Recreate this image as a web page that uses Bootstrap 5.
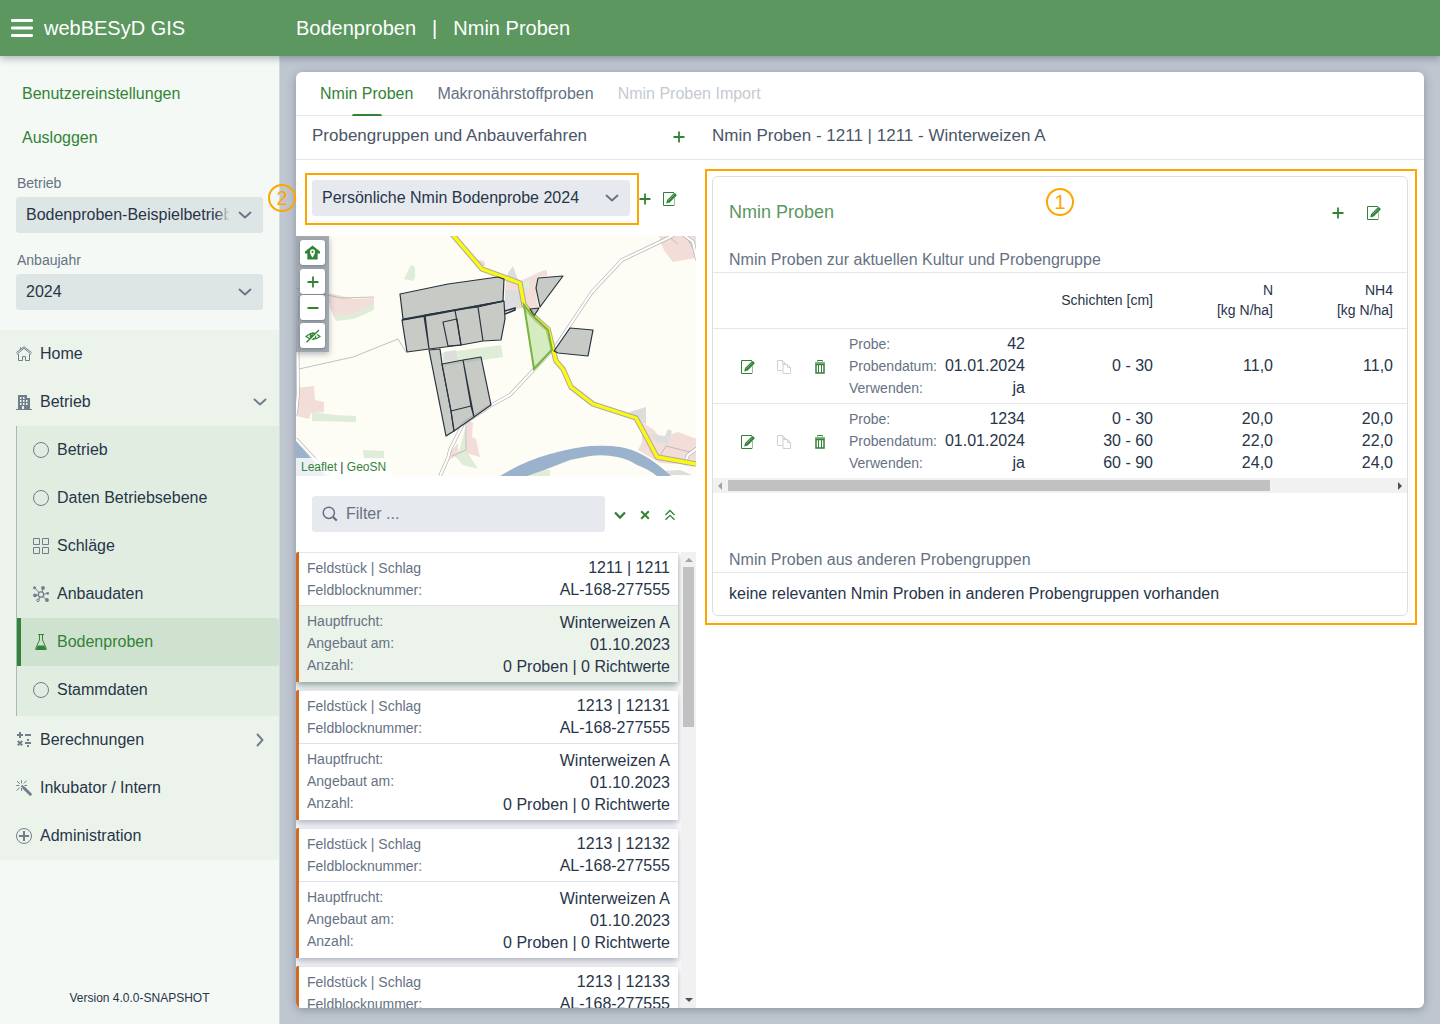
<!DOCTYPE html>
<html lang="de">
<head>
<meta charset="utf-8">
<meta name="viewport" content="width=device-width, initial-scale=1">
<title>webBESyD GIS</title>
<link href="https://cdn.jsdelivr.net/npm/bootstrap@5.3.0/dist/css/bootstrap.min.css" rel="stylesheet">
<script src="https://cdn.jsdelivr.net/npm/bootstrap@5.3.0/dist/js/bootstrap.bundle.min.js" defer></script>
<style>
:root{--ink:#283549;--ink2:#667283;--ink3:#4a5667;--gr:#338336;--line:#e4e6ea;--mark-c:#ffa500}
body{font-family:"Liberation Sans",Arial,sans-serif;font-size:16px;line-height:24px;color:var(--ink);background:#bfc6d0}
a{color:var(--gr);text-decoration:none}
svg{display:block;flex:none}
.topbar{height:56px;background:#5b975f;color:#fff;font-size:20px;box-shadow:0 2px 8px rgba(40,55,80,.4);z-index:3}
.brand-area{width:296px;padding-left:11px;gap:11px}
.icon-btn{border:0;background:none;padding:0;width:25px;height:25px;color:var(--gr);display:inline-flex;align-items:center;justify-content:center;flex:none}
.icon-btn:disabled{color:#cdd2d9}
.top-btn{width:22px;color:#fff}
.side{width:280px;background:#f4f9f5;border-right:1px solid #d3dbdf;padding-top:16px}
.side-link{display:block;padding:10px 22px;color:var(--gr)}
.side-form{padding:11px 16px 20px}
.field-label{display:block;font-size:14px;line-height:24px;color:var(--ink2);padding-left:1px;margin-bottom:2px}
.field-gap{margin-top:15px}
.fancy-select{--bs-form-select-bg-img:url("data:image/svg+xml,%3Csvg xmlns='http://www.w3.org/2000/svg' viewBox='0 0 16 16'%3E%3Cpath fill='none' stroke='%23667283' stroke-width='1.8' stroke-linecap='round' stroke-linejoin='round' d='M2.500 5.500l5.500 5 5.500-5'/%3E%3C/svg%3E");
 height:36px;border:0;border-radius:3px;background-color:#e6e9ee;color:var(--ink);font-size:16px;padding:0 34px 0 10px;background-size:16px 16px;background-position:right 10px center;line-height:24px}
.side .fancy-select{background-color:#dee6e5}
.fade-wrap{position:relative}
.fade-wrap::after{content:"";position:absolute;right:34px;top:4px;bottom:4px;width:14px;background:linear-gradient(90deg,rgba(222,230,229,0),rgba(222,230,229,.9));pointer-events:none}
.menu-block{background:#ebf3eb}
.menu-item{display:flex;align-items:center;gap:8px;height:48px;padding:0 11px 0 16px;color:var(--ink)}
.menu-item svg{color:#717d8b}
.submenu{margin-left:16px;border-left:1px solid #a9b8bd;background:#e1ede1;padding-bottom:2px}
.menu-item.current{background:#cfe2cf;color:var(--gr);border-left:4px solid var(--gr);padding-left:12px;border-radius:0 3px 3px 0}
.menu-item.current svg{color:var(--gr)}
.version{font-size:12px;line-height:16px;padding-bottom:18px;text-align:center}
.workspace{padding:16px;background:#bfc6d0}
.panel{background:#fff;border-radius:6px;box-shadow:0 2px 10px rgba(40,55,80,.35)}
.panel-body{min-height:0}
.tabs{border-bottom:1px solid var(--line);padding:0 24px;gap:24px;height:44px}
.tabs .tab-link{position:relative;border:0;background:none;padding:0;color:var(--ink2)}
.tabs .tab-link.current{color:var(--gr)}
.tabs .tab-link.current::after{content:"";position:absolute;left:50%;margin-left:-15px;bottom:-1px;width:30px;height:2px;border-radius:2px 2px 0 0;background:var(--gr)}
.tabs .tab-link:disabled{color:#c5cad2}
.left-col{width:400px}
.col-head{height:44px;border-bottom:1px solid var(--line);font-size:17px;color:var(--ink3);padding:0 5px 4px 16px}
.col-head .icon-btn{margin-top:3px}
.tool-row{padding:20px 14px 20px 16px;gap:2px}
.tool-btns{padding-top:2px}
.framed{position:relative}
.framed::before{content:"";position:absolute;inset:-7px -9px -9px -7px;border:2px solid var(--mark-c);pointer-events:none;z-index:2}
.probe-card.framed::before{inset:-8px -10px -10px -8px}
.callout{position:absolute;z-index:4;width:28px;height:28px;border:2px solid var(--mark-c);border-radius:50%;color:var(--mark-c);font-size:20px;line-height:24px;text-align:center}
.callout.two{left:-44px;top:4px}
.callout.one{left:50%;margin-left:-14px;top:11px}
.map{height:240px;position:relative;overflow:hidden;background:#fefdf5}
.map-tools{position:absolute;left:0;top:0;padding:4px;background:rgba(125,135,150,.72);box-shadow:0 2px 6px rgba(40,55,80,.35);gap:4px}
.map-tools .icon-btn{background:#fff;border-radius:3px;box-shadow:0 1px 3px rgba(40,55,80,.35)}
.zoom-pair{gap:1px;margin-bottom:-1px}
.map-credit{position:absolute;left:0;bottom:0;background:rgba(255,255,255,.8);padding:0 5px;font-size:12px;line-height:18px}
.filter-box{position:relative}
.filter-box svg{position:absolute;left:10px;top:10px;color:var(--ink2)}
.filter-box .form-control{height:36px;border:0;border-radius:3px;background:#e6e9ee;padding:0 10px 0 34px;font-size:16px;line-height:24px}
.filter-box .form-control::placeholder{color:var(--ink2)}
.entries{overflow:hidden;padding-right:3px;border-bottom-left-radius:6px}
.entry{border-left:3px solid #d2691e;background:#fff;margin-bottom:8px;border-radius:2px 0 0 0;box-shadow:0 3px 6px rgba(45,60,95,.3),0 6px 10px rgba(45,60,95,.1)}
.entry.chosen{box-shadow:0 3px 6px rgba(45,75,70,.4),0 6px 10px rgba(45,95,80,.2)}
.entry-top{border-top:1px solid var(--line);padding:4px 8px}
.entry-bot{border-top:1px solid #dfe2e7;padding:6px 8px 4px}
.chosen .entry-bot{background:#ebf3eb}
.pair{display:flex;justify-content:space-between;line-height:22px}
.entry-top .pair,.probe-table .pair{align-items:baseline}
.pair span:first-child{font-size:14px;color:var(--ink2)}
.entry-bot .pair span:first-child{line-height:18px}
.vbar{width:15px;background:#f1f1f1;padding:4px 2px}
.vbar .thumb{width:11px;height:160px;background:#c1c1c1;margin-top:5px}
.hbar{height:15px;background:#f1f1f1;padding:0 4px;gap:5px}
.hbar .thumb{height:11px;width:79%;background:#c1c1c1}
.right-body{padding:16px}
.probe-card{border:1px solid #dbdfe4;border-radius:6px}
.probe-head{height:70px;padding:0 21px 0 16px;font-size:18px;color:#5b975f;gap:11px}
.probe-head .icon-btn{margin-top:2px}
.sub-head{color:var(--ink2);padding:1px 16px 0;border-bottom:1px solid var(--line)}
.probe-table{table-layout:fixed;width:100%;margin:0}
.probe-table th{font-size:14px;line-height:20px;font-weight:400;padding:7px 14px 8px 8px;text-align:right;vertical-align:middle;border-bottom:1px solid var(--line)}
.probe-table td{padding:4px 14px 4px 8px;line-height:22px;text-align:right;vertical-align:middle}
.probe-table tr+tr td{border-top:1px solid var(--line)}
.probe-table .acts{width:128px}
.probe-table .layer{width:128px}
.probe-table .num{width:120px}
.act-row{display:flex;gap:11px;padding-left:14px;padding-top:2px}
.probe-table td.act-cell{padding-left:8px;padding-right:0}
.others{padding-top:54px}
.none-note{padding:9px 16px}
</style>
</head>
<body>
<svg width="0" height="0" class="position-absolute" aria-hidden="true">
 <defs>
  <symbol id="plus" viewBox="0 0 14 14"><path d="M7 1.500v11M1.500 7h11" stroke="currentColor" stroke-width="1.800" fill="none"/></symbol>
  <symbol id="edit" viewBox="0 0 14 14"><path d="M11 .5H.5v13h10.500" fill="none" stroke="currentColor"/><path d="M11.500 6v7.500M9.500.500h1.500" fill="none" stroke="currentColor" opacity=".5"/><path d="M3.200 11.500l.9-3.400L10.800 1.200q.7-.6 1.300 0l1.300 1.200q.6.600 0 1.300L6.700 10.500z" fill="currentColor"/><path d="M5.300 8.600L11.300 2.700" stroke="#fff" stroke-width=".6" opacity=".6"/></symbol>
  <symbol id="copy" viewBox="0 0 14 14"><path d="M5.500 10.500h-5v-10H5.500l3 3M5.500.5v3h3M6 4.500h4.500l3 3v6H6zM10.500 4.500v3h3" fill="none" stroke="currentColor"/></symbol>
  <symbol id="trash" viewBox="0 0 14 14"><path d="M4.500 1.500V.5h5v1" fill="none" stroke="currentColor"/><path d="M2 2h10v2H2z" fill="currentColor" opacity=".6"/><path d="M3 4.500h8V13H3z" fill="none" stroke="currentColor" stroke-width="1.500"/><path d="M5.500 5v8M8.500 5v8" stroke="currentColor"/></symbol>
  <symbol id="ring" viewBox="0 0 16 16"><circle cx="8" cy="8" r="7.500" fill="none" stroke="currentColor"/></symbol>
 </defs>
</svg>
<div class="d-flex flex-column vh-100 overflow-hidden">
 <header class="topbar d-flex align-items-center flex-shrink-0">
  <div class="brand-area d-flex align-items-center">
   <button class="icon-btn top-btn" aria-label="Menü"><svg width="22" height="18" viewBox="0 0 22 18"><path d="M1.300 1.500h19.400M1.300 9h19.400M1.300 16.500h19.400" stroke="#fff" stroke-width="2.800" stroke-linecap="round"/></svg></button>
   <span>webBESyD GIS</span>
  </div>
  <div class="d-flex gap-3"><span>Bodenproben</span><span>|</span><span>Nmin Proben</span></div>
 </header>

 <div class="d-flex flex-grow-1 overflow-hidden">
  <aside class="side d-flex flex-column flex-shrink-0">
   <a class="side-link" href="#">Benutzereinstellungen</a>
   <a class="side-link" href="#">Ausloggen</a>
   <div class="side-form">
    <label class="field-label" for="betrieb">Betrieb</label>
    <div class="fade-wrap"><select id="betrieb" class="form-select fancy-select"><option>Bodenproben-Beispielbetrieb</option></select></div>
    <label class="field-label field-gap" for="jahr">Anbaujahr</label>
    <select id="jahr" class="form-select fancy-select"><option>2024</option></select>
   </div>
   <nav class="menu-block">
    <a class="menu-item" href="#"><svg width="16" height="16" viewBox="0 0 16 16" fill="none" stroke="currentColor"><path d="M.8 8.300L8 2.300l7.200 6M.4 6.500L8 .8l7.600 5.700M4.500 3.500V1.300M2.500 8v6.500h4v-4h3v4h4V8"/></svg>Home</a>
    <a class="menu-item" href="#"><svg width="16" height="16" viewBox="0 0 16 16"><path d="M2 1h9v3h3v11h2v1H0v-1h2z" fill="currentColor"/><path d="M4 3h1.500v2H4zM7 3h1.500v2H7zM4 6h1.500v2H4zM7 6h1.500v2H7zM10 6h1.500v2H10zM4 9h1.500v2H4zM7 9h1.500v2H7zM10 9h1.500v2H10zM6 12h2v3H6z" fill="#ebf3eb"/></svg><span class="flex-grow-1">Betrieb</span><svg width="16" height="16" viewBox="0 0 16 16"><path d="M2.500 5.500L8 10.500l5.500-5" fill="none" stroke="currentColor" stroke-width="1.900" stroke-linecap="round" stroke-linejoin="round"/></svg></a>
    <div class="submenu">
     <a class="menu-item" href="#"><svg width="16" height="16"><use href="#ring"/></svg>Betrieb</a>
     <a class="menu-item" href="#"><svg width="16" height="16"><use href="#ring"/></svg>Daten Betriebsebene</a>
     <a class="menu-item" href="#"><svg width="16" height="16" viewBox="0 0 16 16" fill="none" stroke="currentColor"><path d="M.5.500h6v6h-6zM9.500.500h6v6h-6zM.5 9.500h6v6h-6zM9.500 9.500h6v6h-6z"/></svg>Schläge</a>
     <a class="menu-item" href="#"><svg width="16" height="16" viewBox="0 0 16 16"><g fill="none" stroke="currentColor"><circle cx="8" cy="8.500" r="2.700" stroke-width="1.300"/><path d="M2 2l4 4.500M10 2l-1 4M10.500 8.500L15 7M5.500 9L2 9.500M7 11l-1.500 3M10 10.500l4 4"/><circle cx="5" cy="14.300" r="1.300" fill="#e1ede1"/></g><g fill="currentColor"><circle cx="1.600" cy="1.800" r="1.500"/><circle cx="10" cy="2" r="1.900"/><circle cx="14.700" cy="7.300" r="1.400"/><circle cx="2" cy="9.300" r="1.900"/><circle cx="14" cy="14" r="1.900"/></g></svg>Anbaudaten</a>
     <a class="menu-item current" href="#"><svg width="16" height="16" viewBox="0 0 16 16"><path d="M5 .5h6M6.500.5v5.500L2.700 14.500v1h10.600v-1L9.500 6V.5" fill="none" stroke="currentColor"/><path d="M4.800 11.500h6.400l2 4H2.800z" fill="currentColor"/></svg>Bodenproben</a>
     <a class="menu-item" href="#"><svg width="16" height="16"><use href="#ring"/></svg>Stammdaten</a>
    </div>
    <a class="menu-item" href="#"><svg width="16" height="16" viewBox="0 0 16 16" fill="none" stroke="currentColor" stroke-width="2"><path d="M1 3h6M4 0v6M9 3h6M1.800 9l4.400 4.400M6.200 9l-4.400 4.400M9 11h6"/><path d="M11 8h2M11 14h2" stroke-width="1.800"/></svg><span class="flex-grow-1">Berechnungen</span><svg width="16" height="16" viewBox="0 0 16 16"><path d="M5.500 2.500l5 5.500-5 5.500" fill="none" stroke="currentColor" stroke-width="1.900" stroke-linecap="round" stroke-linejoin="round"/></svg></a>
    <a class="menu-item" href="#"><svg width="16" height="16" viewBox="0 0 16 16" fill="none" stroke="currentColor"><path d="M5.500.3v3M.3 5.500h3M1 1l2.800 2.800M10.500.700L7.800 3.400M.7 10.500l3-3M8.500 5.500h2.500M5.500 8v3"/><path d="M5.500 5.500l3 3" stroke-width="2"/><path d="M8 8l6.300 6.200" stroke-width="3" stroke-linecap="round"/></svg>Inkubator / Intern</a>
    <a class="menu-item" href="#"><svg width="16" height="16" viewBox="0 0 16 16" fill="none" stroke="currentColor"><circle cx="8" cy="8" r="7.500"/><path d="M8 3v10M3 8h10" stroke-width="2"/></svg>Administration</a>
   </nav>
   <div class="version mt-auto">Version 4.0.0-SNAPSHOT</div>
  </aside>

  <main class="workspace flex-grow-1 d-flex">
   <div class="panel flex-grow-1 d-flex flex-column">
    <div class="tabs d-flex flex-shrink-0" role="tablist">
     <button class="tab-link current" role="tab">Nmin Proben</button>
     <button class="tab-link" role="tab">Makronährstoffproben</button>
     <button class="tab-link" role="tab" disabled>Nmin Proben Import</button>
    </div>
    <div class="panel-body d-flex flex-grow-1">
     <section class="left-col d-flex flex-column flex-shrink-0">
      <div class="col-head d-flex align-items-center justify-content-between flex-shrink-0">Probengruppen und Anbauverfahren
       <button class="icon-btn" aria-label="Neue Probengruppe"><svg width="14" height="14"><use href="#plus"/></svg></button></div>
      <div class="tool-row d-flex align-items-center">
       <div class="framed flex-grow-1"><select class="form-select fancy-select" aria-label="Probengruppe"><option>Persönliche Nmin Bodenprobe 2024</option></select><span class="callout two">2</span></div>
       <div class="tool-btns d-flex"><button class="icon-btn" aria-label="Hinzufügen"><svg width="14" height="14"><use href="#plus"/></svg></button><button class="icon-btn" aria-label="Bearbeiten"><svg width="14" height="14"><use href="#edit"/></svg></button></div>
      </div>
      <div class="map flex-shrink-0">
       <svg width="100%" height="240" viewBox="0 0 400 240" preserveAspectRatio="xMidYMid slice">
        <g fill="#dfecd8"><path d="M115 29l4 2v10l-2 4-9-2z"/><path d="M33 70l20 7 25-12v9l-20 9-18 2z"/><path d="M146 117l59-8 2 12-60 9z"/><path d="M16 176l23 3 21 1v6l-44-1z"/><path d="M67 214l21 1v8H68zM155 216l8-1 7-26v25l12 19-15-4zM232 234h22v6h-32z"/></g>
        <g fill="#f2ddd8"><path d="M33 57l25 6 20-1v5l-20 10-20 3-6-15z"/><path d="M0 152l18-2 1 14 9 2v10l-13 1-2 6-13-3z"/><path d="M210 44l14 1 22-10 5-1v6l-10 1-1 15 3 20-11 1-8-20-15-1z"/><path d="M363 0h37v22l-23 4-8-10-3-6z"/><path d="M171 186l6 0-1 15 4 2 4 18-14-4zM155 215l7-8v12l-9 5z"/><path d="M346 186l12 8 6 8 18-6 19 7v26l-37-2-22-13 4-8z"/></g>
        <path d="M227 46l7-2v8l-7 1z" fill="#dfecd8"/>
        <g fill="#dedddd"><path d="M212 37l5-7 5 14-12-1zM209 54h15l3 18-18 2zM148 116l12-2 2 10-14 1zM333 176l17-5v17l-8-3zM354 198l15 2 3-7 4 2-4 13-12-2zM366 235l18-1 12 5H366z"/></g>
        <path d="M182 24l6 1 1 5-6 0z" fill="#eed6dc"/>
        <g fill="#9ab2cc"><path d="M0 205l30 35H0z"/><path d="M204 240Q228 225 254 218T294 210Q312 209 324 211T347 219Q360 226 375 240H361Q352 233 341 229 332 223 321 221 308 218 294 220L274 224 251 233 231 240z"/></g>
        <g fill="none" stroke="#b9b9b9" stroke-width=".9"><path d="M0 52l45 10 33-1M3 133l54-12 45-18 8 13M156 220l14-6V188M362 223l8-13 24 6M372 0l10 8M390 0l10 18"/></g>
        <g fill="none" stroke="#b5b5b5" stroke-width="3.600"><path d="M144 240l8-18 2-8 8-16 5-10 27-18 20-11 46-49 36-54 30-32 40-19 18-9 13 10 4 18"/><path d="M0 203l34 37M1 60l1 98-2 20M388 229l4-10 12-9"/></g>
        <g fill="none" stroke="#fff" stroke-width="2.200"><path d="M144 240l8-18 2-8 8-16 5-10 27-18 20-11 46-49 36-54 30-32 40-19 18-9 13 10 4 18"/><path d="M0 203l34 37M1 60l1 98-2 20M388 229l4-10 12-9"/></g>
        <path d="M156-2l30 35 38 14 4 22q10 13 24 24l5 20 3 12 7 8 8 18 22 17 43 14 12 22 9 17 39 7" fill="none" stroke="#aaa" stroke-width="5.400" stroke-linejoin="round"/>
        <path d="M156-2l30 35 38 14 4 22q10 13 24 24l5 20 3 12 7 8 8 18 22 17 43 14 12 22 9 17 39 7" fill="none" stroke="#fdf90c" stroke-width="3.400" stroke-linejoin="round"/>
        <g fill="#929898" fill-opacity=".5" stroke="#26333f" stroke-width="1.200" stroke-linejoin="round">
         <path d="M104 58L152 48 202 41 208 43 207 65 107 83z"/>
         <path d="M106 84L128 80 133 113 111 116zM129 79L159 74 165 109 133 113zM159 74L182 71 187 105 165 109zM182 71L208 65 209 83 205 104 187 105z"/>
         <path d="M147 86L161 83 165 109 152 110z" fill="none"/>
         <path d="M133 114L144 113 146 128 155 175 158 195 150 200z"/>
         <path d="M146 128L167 124 175 170 155 175zM167 124L185 121 195 169 178 181zM155 175L175 170 178 181 158 195z"/>
         <path d="M242 42l25-2-23 31-4-19zM234 73l9-1-5 8zM274 92l23 2-5 26-30-3-4-2z"/>
        </g>
        <path d="M106 84L140 78 208 65M209 75l10-3v2l-10 4" fill="none" stroke="#26333f" stroke-width="1.600"/>
        <path d="M228 69l8 10 16 15 4 20-18 19z" fill="#b5dc94" fill-opacity=".55" stroke="#78b440" stroke-width="2"/>
       </svg>
       <div class="map-tools d-flex flex-column">
        <button class="icon-btn" aria-label="Startansicht"><svg width="15" height="15" viewBox="0 0 16 16"><path d="M8 .5L0 7v2h2.500v6.500h11V9H16V7z" fill="currentColor"/><path d="M8 13.500Q5.300 9.500 5.300 7.200a2.700 2.700 0 0 1 5.400 0Q10.700 9.500 8 13.500z" fill="#fff"/><circle cx="8" cy="7.300" r="1.200" fill="currentColor"/></svg></button>
        <div class="zoom-pair d-flex flex-column">
         <button class="icon-btn" aria-label="Vergrößern"><svg width="14" height="14"><use href="#plus"/></svg></button>
         <button class="icon-btn" aria-label="Verkleinern"><svg width="14" height="14" viewBox="0 0 14 14"><path d="M1.500 7h11" stroke="currentColor" stroke-width="2"/></svg></button>
        </div>
        <button class="icon-btn" aria-label="Ausblenden"><svg width="16" height="16" viewBox="0 0 16 16" fill="none" stroke="currentColor"><path d="M1 8.500Q8 1.800 15 8.500 8 14 1 8.500z" stroke-width="1.200"/><circle cx="8" cy="8" r="2.800" stroke-width="1.200"/><circle cx="7.500" cy="8" r="1.300" fill="currentColor"/><path d="M2.500 14.500L14.500 3" stroke="#fff" stroke-width="1.500"/><path d="M1.500 14.200L14 2" stroke-width="1.300"/></svg></button>
       </div>
       <div class="map-credit"><a href="#">Leaflet</a> | <a href="#">GeoSN</a></div>
      </div>
      <div class="tool-row d-flex align-items-center flex-shrink-0">
       <div class="filter-box flex-grow-1"><input class="form-control" type="text" placeholder="Filter ..." aria-label="Filter"><svg width="16" height="16" viewBox="0 0 16 16" fill="none" stroke="currentColor"><circle cx="6.800" cy="6.800" r="5.600" stroke-width="1.500"/><path d="M10.800 10.800l4 3.800" stroke-width="2.200"/></svg></div>
       <div class="tool-btns d-flex">
        <button class="icon-btn" aria-label="Aufklappen"><svg width="14" height="14" viewBox="0 0 14 14"><path d="M2 4.500l5 5 5-5" fill="none" stroke="currentColor" stroke-width="2.300"/></svg></button>
        <button class="icon-btn" aria-label="Löschen"><svg width="14" height="14" viewBox="0 0 14 14"><path d="M3.200 3.200l7.600 7.600M10.800 3.200l-7.600 7.600" stroke="currentColor" stroke-width="2"/></svg></button>
        <button class="icon-btn" aria-label="Zuklappen"><svg width="14" height="14" viewBox="0 0 14 14"><path d="M2.500 7L7 2.500 11.500 7M2.500 11.800L7 7.300l4.500 4.500" fill="none" stroke="currentColor" stroke-width="1.300"/></svg></button>
       </div>
      </div>
      <div class="d-flex flex-grow-1 overflow-hidden">
       <div class="entries flex-grow-1">
        <article class="entry chosen">
         <div class="entry-top"><div class="pair"><span>Feldstück | Schlag</span><span>1211 | 1211</span></div><div class="pair"><span>Feldblocknummer:</span><span>AL-168-277555</span></div></div>
         <div class="entry-bot"><div class="pair"><span>Hauptfrucht:</span><span>Winterweizen A</span></div><div class="pair"><span>Angebaut am:</span><span>01.10.2023</span></div><div class="pair"><span>Anzahl:</span><span>0 Proben | 0 Richtwerte</span></div></div>
        </article>
        <article class="entry">
         <div class="entry-top"><div class="pair"><span>Feldstück | Schlag</span><span>1213 | 12131</span></div><div class="pair"><span>Feldblocknummer:</span><span>AL-168-277555</span></div></div>
         <div class="entry-bot"><div class="pair"><span>Hauptfrucht:</span><span>Winterweizen A</span></div><div class="pair"><span>Angebaut am:</span><span>01.10.2023</span></div><div class="pair"><span>Anzahl:</span><span>0 Proben | 0 Richtwerte</span></div></div>
        </article>
        <article class="entry">
         <div class="entry-top"><div class="pair"><span>Feldstück | Schlag</span><span>1213 | 12132</span></div><div class="pair"><span>Feldblocknummer:</span><span>AL-168-277555</span></div></div>
         <div class="entry-bot"><div class="pair"><span>Hauptfrucht:</span><span>Winterweizen A</span></div><div class="pair"><span>Angebaut am:</span><span>01.10.2023</span></div><div class="pair"><span>Anzahl:</span><span>0 Proben | 0 Richtwerte</span></div></div>
        </article>
        <article class="entry">
         <div class="entry-top"><div class="pair"><span>Feldstück | Schlag</span><span>1213 | 12133</span></div><div class="pair"><span>Feldblocknummer:</span><span>AL-168-277555</span></div></div>
        </article>
       </div>
       <div class="vbar d-flex flex-column align-items-center flex-shrink-0">
        <svg width="8" height="6" viewBox="0 0 8 6"><path d="M0 6l4-4 4 4z" fill="#a3a3a3"/></svg>
        <div class="thumb"></div>
        <svg class="mt-auto" width="8" height="8" viewBox="0 0 8 8"><path d="M0 2h8L4 6z" fill="#505050"/></svg>
       </div>
      </div>
     </section>

     <section class="flex-grow-1">
      <div class="col-head d-flex align-items-center">Nmin Proben - 1211 | 1211 - Winterweizen A</div>
      <div class="right-body">
       <div class="probe-card framed">
        <span class="callout one">1</span>
        <div class="probe-head d-flex align-items-center"><span class="flex-grow-1">Nmin Proben</span>
         <button class="icon-btn" aria-label="Hinzufügen"><svg width="14" height="14"><use href="#plus"/></svg></button>
         <button class="icon-btn" aria-label="Bearbeiten"><svg width="14" height="14"><use href="#edit"/></svg></button></div>
        <div class="sub-head">Nmin Proben zur aktuellen Kultur und Probengruppe</div>
        <table class="probe-table">
         <thead><tr><th class="acts"></th><th></th><th class="layer">Schichten [cm]</th><th class="num">N<br>[kg N/ha]</th><th class="num">NH4<br>[kg N/ha]</th></tr></thead>
         <tbody>
          <tr><td class="act-cell"><div class="act-row"><button class="icon-btn" aria-label="Bearbeiten"><svg width="14" height="14"><use href="#edit"/></svg></button><button class="icon-btn" aria-label="Kopieren" disabled><svg width="14" height="14"><use href="#copy"/></svg></button><button class="icon-btn" aria-label="Löschen"><svg width="14" height="14"><use href="#trash"/></svg></button></div></td>
           <td><div class="pair"><span>Probe:</span><span>42</span></div><div class="pair"><span>Probendatum:</span><span>01.01.2024</span></div><div class="pair"><span>Verwenden:</span><span>ja</span></div></td>
           <td>0 - 30</td><td>11,0</td><td>11,0</td></tr>
          <tr><td class="act-cell"><div class="act-row"><button class="icon-btn" aria-label="Bearbeiten"><svg width="14" height="14"><use href="#edit"/></svg></button><button class="icon-btn" aria-label="Kopieren" disabled><svg width="14" height="14"><use href="#copy"/></svg></button><button class="icon-btn" aria-label="Löschen"><svg width="14" height="14"><use href="#trash"/></svg></button></div></td>
           <td><div class="pair"><span>Probe:</span><span>1234</span></div><div class="pair"><span>Probendatum:</span><span>01.01.2024</span></div><div class="pair"><span>Verwenden:</span><span>ja</span></div></td>
           <td>0 - 30<br>30 - 60<br>60 - 90</td><td>20,0<br>22,0<br>24,0</td><td>20,0<br>22,0<br>24,0</td></tr>
         </tbody>
        </table>
        <div class="hbar d-flex align-items-center"><svg width="6" height="8" viewBox="0 0 6 8"><path d="M5 0v8L1 4z" fill="#a3a3a3"/></svg><div class="thumb"></div><svg class="ms-auto" width="6" height="8" viewBox="0 0 6 8"><path d="M1 0v8l4-4z" fill="#505050"/></svg></div>
        <div class="others"><div class="sub-head">Nmin Proben aus anderen Probengruppen</div></div>
        <div class="none-note">keine relevanten Nmin Proben in anderen Probengruppen vorhanden</div>
       </div>
      </div>
     </section>
    </div>
   </div>
  </main>
 </div>
</div>
</body>
</html>
